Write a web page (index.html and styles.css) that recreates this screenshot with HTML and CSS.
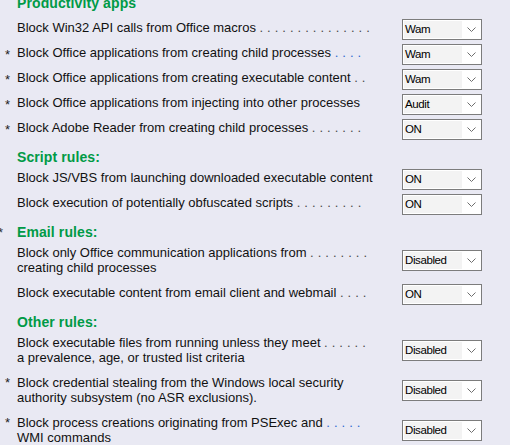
FILE: index.html
```html
<!DOCTYPE html>
<html lang="en">
<head>
<meta charset="utf-8">
<title>Attack surface reduction rules</title>
<link rel="stylesheet" href="styles.css">
</head>
<body>
<div class="panel">

  <section class="group">
    <h2 class="group-title"><span class="mark"></span><span>Productivity apps</span></h2>

    <div class="rule">
      <span class="mark"></span>
      <span class="label">Block Win32 API calls from Office macros <span class="leader">. . . . . . . . . . . . . . .</span></span>
      <div class="combo"><span class="value">Wam</span><span class="arrow"><svg width="9" height="5" viewBox="0 0 9 5"><polyline points="0.5,0.5 4.5,4.5 8.5,0.5"/></svg></span></div>
    </div>

    <div class="rule">
      <span class="mark">*</span>
      <span class="label">Block Office applications from creating child processes <span class="leader leader--blue">. . . .</span></span>
      <div class="combo"><span class="value">Wam</span><span class="arrow"><svg width="9" height="5" viewBox="0 0 9 5"><polyline points="0.5,0.5 4.5,4.5 8.5,0.5"/></svg></span></div>
    </div>

    <div class="rule">
      <span class="mark">*</span>
      <span class="label">Block Office applications from creating executable content <span class="leader">. .</span></span>
      <div class="combo"><span class="value">Wam</span><span class="arrow"><svg width="9" height="5" viewBox="0 0 9 5"><polyline points="0.5,0.5 4.5,4.5 8.5,0.5"/></svg></span></div>
    </div>

    <div class="rule">
      <span class="mark">*</span>
      <span class="label">Block Office applications from injecting into other processes</span>
      <div class="combo"><span class="value">Audit</span><span class="arrow"><svg width="9" height="5" viewBox="0 0 9 5"><polyline points="0.5,0.5 4.5,4.5 8.5,0.5"/></svg></span></div>
    </div>

    <div class="rule">
      <span class="mark">*</span>
      <span class="label">Block Adobe Reader from creating child processes <span class="leader">. . . . . . .</span></span>
      <div class="combo"><span class="value">ON</span><span class="arrow"><svg width="9" height="5" viewBox="0 0 9 5"><polyline points="0.5,0.5 4.5,4.5 8.5,0.5"/></svg></span></div>
    </div>
  </section>

  <section class="group">
    <h2 class="group-title"><span class="mark"></span><span>Script rules:</span></h2>

    <div class="rule">
      <span class="mark"></span>
      <span class="label">Block JS/VBS from launching downloaded executable content</span>
      <div class="combo"><span class="value">ON</span><span class="arrow"><svg width="9" height="5" viewBox="0 0 9 5"><polyline points="0.5,0.5 4.5,4.5 8.5,0.5"/></svg></span></div>
    </div>

    <div class="rule">
      <span class="mark"></span>
      <span class="label">Block execution of potentially obfuscated scripts <span class="leader">. . . . . . . . .</span></span>
      <div class="combo"><span class="value">ON</span><span class="arrow"><svg width="9" height="5" viewBox="0 0 9 5"><polyline points="0.5,0.5 4.5,4.5 8.5,0.5"/></svg></span></div>
    </div>
  </section>

  <section class="group">
    <h2 class="group-title"><span class="mark mark--edge">*</span><span>Email rules:</span></h2>

    <div class="rule rule--wrap">
      <span class="mark"></span>
      <span class="label">Block only Office communication applications from <span class="leader">. . . . . . . .</span><br>creating child processes</span>
      <div class="combo"><span class="value">Disabled</span><span class="arrow"><svg width="9" height="5" viewBox="0 0 9 5"><polyline points="0.5,0.5 4.5,4.5 8.5,0.5"/></svg></span></div>
    </div>

    <div class="rule">
      <span class="mark"></span>
      <span class="label">Block executable content from email client and webmail <span class="leader">. . . .</span></span>
      <div class="combo"><span class="value">ON</span><span class="arrow"><svg width="9" height="5" viewBox="0 0 9 5"><polyline points="0.5,0.5 4.5,4.5 8.5,0.5"/></svg></span></div>
    </div>
  </section>

  <section class="group">
    <h2 class="group-title"><span class="mark"></span><span>Other rules:</span></h2>

    <div class="rule rule--wrap">
      <span class="mark"></span>
      <span class="label">Block executable files from running unless they meet <span class="leader">. . . . . .</span><br>a prevalence, age, or trusted list criteria</span>
      <div class="combo"><span class="value">Disabled</span><span class="arrow"><svg width="9" height="5" viewBox="0 0 9 5"><polyline points="0.5,0.5 4.5,4.5 8.5,0.5"/></svg></span></div>
    </div>

    <div class="rule rule--wrap">
      <span class="mark">*</span>
      <span class="label">Block credential stealing from the Windows local security<br>authority subsystem (no ASR exclusions).</span>
      <div class="combo"><span class="value">Disabled</span><span class="arrow"><svg width="9" height="5" viewBox="0 0 9 5"><polyline points="0.5,0.5 4.5,4.5 8.5,0.5"/></svg></span></div>
    </div>

    <div class="rule rule--wrap">
      <span class="mark">*</span>
      <span class="label">Block process creations originating from PSExec and <span class="leader leader--blue">. . . . .</span><br>WMI commands</span>
      <div class="combo"><span class="value">Disabled</span><span class="arrow"><svg width="9" height="5" viewBox="0 0 9 5"><polyline points="0.5,0.5 4.5,4.5 8.5,0.5"/></svg></span></div>
    </div>
  </section>

</div>
</body>
</html>
```

FILE: styles.css
```css
html, body {
  margin: 0;
  padding: 0;
  background: #e9e9f3;
}

body {
  font-family: "Liberation Sans", Arial, sans-serif;
  font-size: 13px;
  color: #111;
  overflow: hidden;
}

/* whole settings list; the first heading is scrolled slightly out of view */
.panel {
  margin-top: -4px;
  padding-left: 5px;
  display: flex;
  flex-direction: column;
}

.group {
  display: flex;
  flex-direction: column;
}

.group + .group {
  margin-top: 8px;
}

.group-title {
  display: grid;
  grid-template-columns: 12px auto;
  margin: 0 0 2px;
  font-size: 14px;
  font-weight: bold;
  line-height: 15px;
  color: #009a46;
  letter-spacing: 0.1px;
}

.group:first-child .group-title {
  margin-bottom: 6px;
}

.group-title .mark {
  font-weight: normal;
  color: #333;
}

.mark--edge {
  margin-left: -7px;
  font-size: 12px;
}

/* one rule: marker, description, state picker */
.rule {
  display: grid;
  grid-template-columns: 12px 385px 80px;
  align-items: center;
  min-height: 25px;
}

.rule--wrap {
  min-height: 40px;
}

.group-title + .rule--wrap {
  margin-top: -2px;
}

.rule--wrap + .rule:not(.rule--wrap) {
  margin-top: 2px;
}

.mark {
  align-self: start;
  padding-top: 5px;
  font-size: 13px;
  line-height: 15px;
  color: #222;
}

.group-title .mark {
  padding-top: 0;
}

.label {
  line-height: 15px;
  padding-bottom: 4px;
  white-space: nowrap;
}

.rule--wrap .label {
  padding-bottom: 0;
}

.leader {
  color: #4a4a4a;
  letter-spacing: 0.2px;
}

.leader--blue {
  color: #2f6ad0;
}

/* drop-down look-alike */
.combo {
  box-sizing: border-box;
  width: 80px;
  height: 21px;
  padding: 1px;
  display: flex;
  border: 1px solid #7c7c7c;
  background: #ffffff;
}

.value {
  flex: 0 0 58px;
  box-sizing: border-box;
  padding-left: 1px;
  background: #f3f3f3;
  font-size: 11.5px;
  letter-spacing: -0.4px;
  line-height: 17px;
  color: #000;
}

.arrow {
  flex: 1;
  display: flex;
  align-items: center;
  justify-content: center;
  padding-left: 1px;
}

.arrow svg {
  display: block;
}

.arrow polyline {
  fill: none;
  stroke: #6e6e6e;
  stroke-width: 1;
}
```
